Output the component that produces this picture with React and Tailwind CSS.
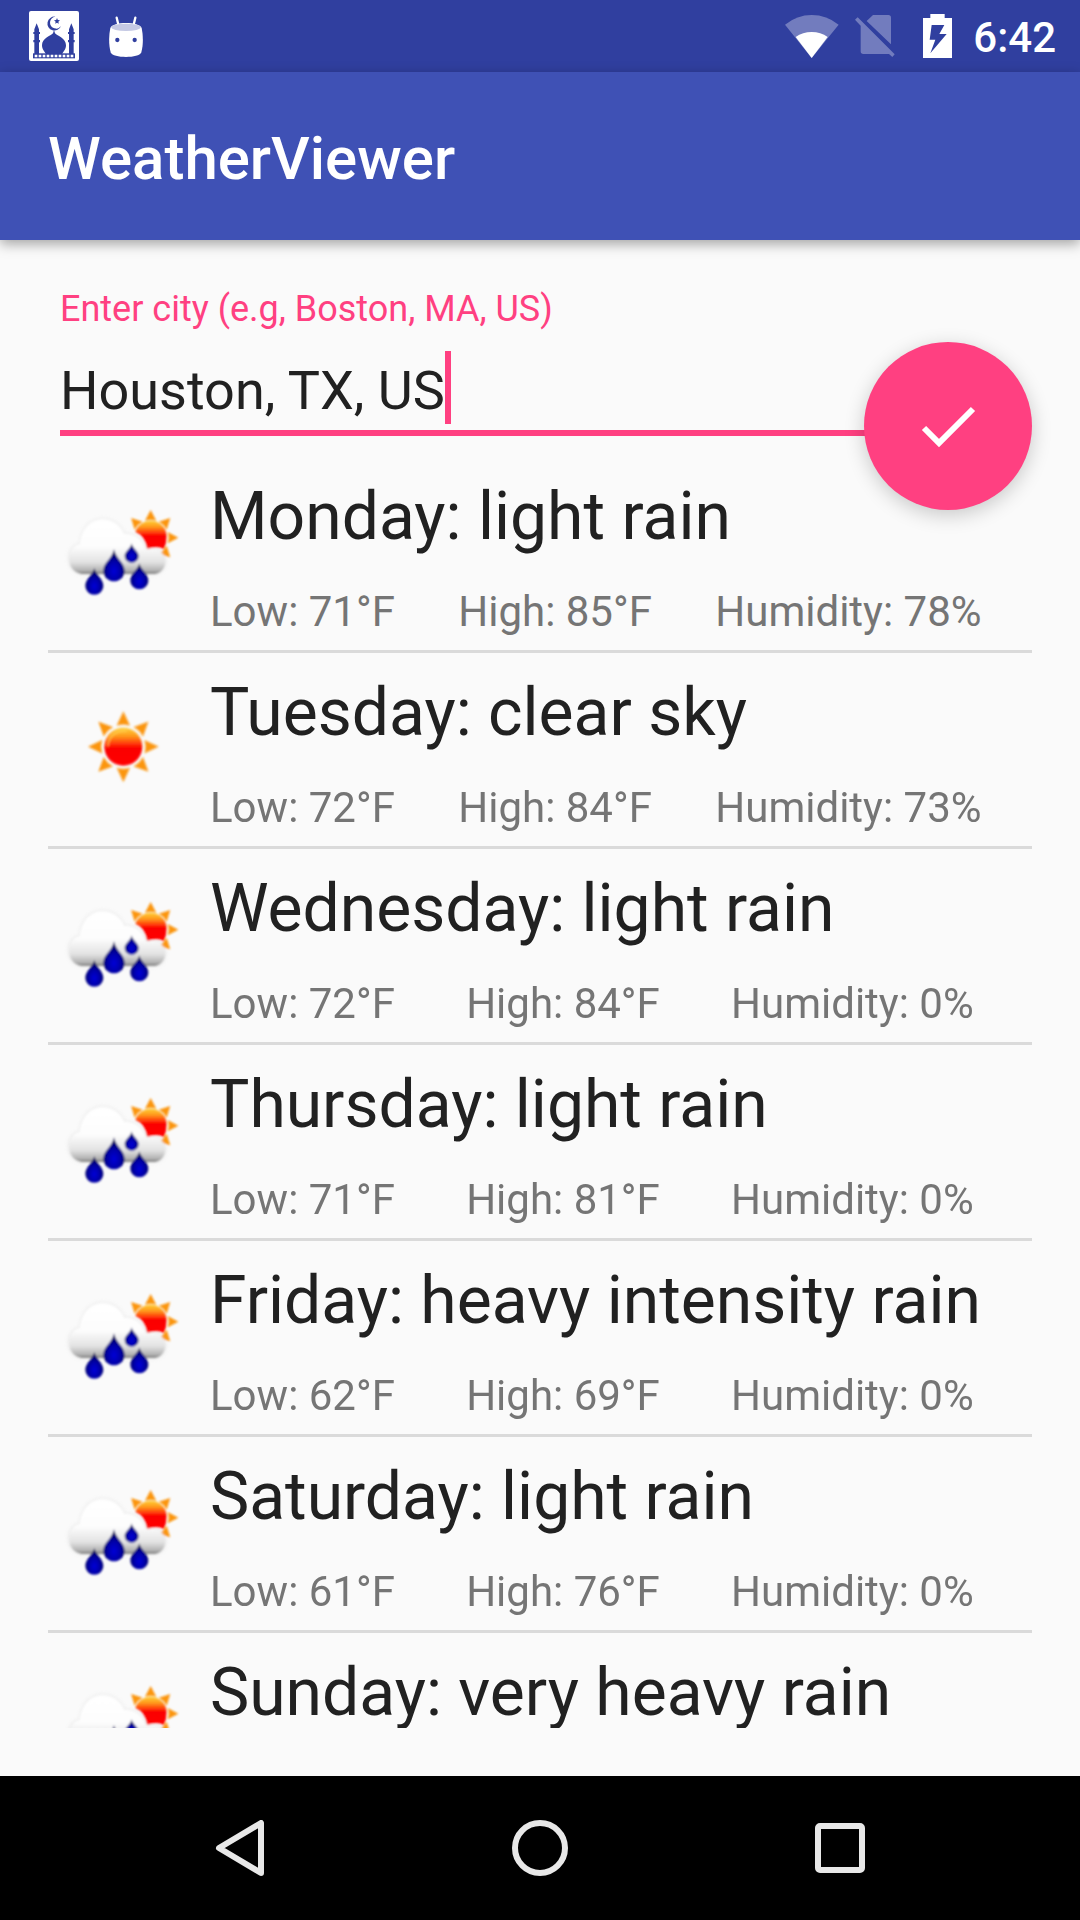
import { useState } from "react";

const forecast = [
  { day: "Monday", description: "light rain", icon: "rain", low: 71, high: 85, humidity: 78 },
  { day: "Tuesday", description: "clear sky", icon: "sun", low: 72, high: 84, humidity: 73 },
  { day: "Wednesday", description: "light rain", icon: "rain", low: 72, high: 84, humidity: 0 },
  { day: "Thursday", description: "light rain", icon: "rain", low: 71, high: 81, humidity: 0 },
  { day: "Friday", description: "heavy intensity rain", icon: "rain", low: 62, high: 69, humidity: 0 },
  { day: "Saturday", description: "light rain", icon: "rain", low: 61, high: 76, humidity: 0 },
  { day: "Sunday", description: "very heavy rain", icon: "rain" },
];

const rayAngles = [0, 45, 90, 135, 180, 225, 270, 315];

function Gradients() {
  return (
    <svg className="absolute size-0" aria-hidden="true">
      <defs>
        <linearGradient id="sunFill" x1="0" y1="0" x2="0" y2="1">
          <stop offset="0" stopColor="#ffcf3a" />
          <stop offset="0.22" stopColor="#ff9a1c" />
          <stop offset="0.42" stopColor="#ff3a08" />
          <stop offset="0.52" stopColor="#fb0505" />
          <stop offset="1" stopColor="#ff0000" />
        </linearGradient>
        <linearGradient id="cloudFill" gradientUnits="userSpaceOnUse" x1="0" y1="115" x2="0" y2="284">
          <stop offset="0" stopColor="#ffffff" />
          <stop offset="0.5" stopColor="#fdfdfd" />
          <stop offset="0.78" stopColor="#e2e2e2" />
          <stop offset="0.92" stopColor="#b5b5b5" />
          <stop offset="1" stopColor="#777777" />
        </linearGradient>
        <radialGradient id="dropFill" cx="0.5" cy="0.68" r="0.6">
          <stop offset="0" stopColor="#0505d8" />
          <stop offset="0.5" stopColor="#0000a8" />
          <stop offset="1" stopColor="#00004e" />
        </radialGradient>
        <filter id="soft" x="-10%" y="-10%" width="120%" height="120%">
          <feGaussianBlur stdDeviation="3" />
        </filter>
        <filter id="cloudEdge" x="-10%" y="-10%" width="120%" height="120%">
          <feGaussianBlur stdDeviation="4" />
        </filter>
      </defs>
    </svg>
  );
}

function SunIcon() {
  return (
    <svg viewBox="24 -24 450 450" className="size-[150px]" aria-hidden="true">
      <g filter="url(#soft)">
        {rayAngles.map((angle) => (
          <path key={angle} d="M250 94 L270 137 Q250 130 230 137 Z" fill="#fb9510" transform={`rotate(${angle} 250 200)`} />
        ))}
        <circle cx="250" cy="200" r="57" fill="url(#sunFill)" />
        <path d="M204 196 A47 47 0 0 1 258 153" fill="none" stroke="#ffd95c" strokeWidth="6" strokeLinecap="round" opacity="0.6" />
      </g>
    </svg>
  );
}

function RainIcon() {
  return (
    <svg viewBox="24 -12 450 450" className="size-[150px]" aria-hidden="true">
      <g filter="url(#soft)">
        {[0, 45, 90, 135, 315].map((angle) => (
          <path key={angle} d="M332 90 L349 122 Q332 116 315 122 Z" fill="#fb9510" transform={`rotate(${angle} 332 173)`} />
        ))}
        <path
          d="M286 156 A48 48 0 0 1 380 168 Q380 190 372 208 Q352 196 322 208 Q316 168 286 156 Z"
          fill="url(#sunFill)"
        />
        <path
          d="M125 284 C95 280 82 254 84 230 C86 208 102 194 118 190 C122 145 150 115 187 115 C222 115 244 136 254 158 C288 160 312 176 320 204 C352 198 376 216 379 240 C380 264 366 282 344 284 Z"
          fill="#c9c9c9"
          opacity="0.3"
          filter="url(#cloudEdge)"
        />
        <path
          d="M125 282 C97 278 86 254 88 232 C90 210 104 196 120 192 C124 147 152 118 187 118 C220 118 242 138 252 161 C286 163 308 178 316 208 C350 201 373 218 376 240 C377 262 364 280 344 282 Z"
          fill="url(#cloudFill)"
        />
        <path d="M163 264 C166 282 190 296 190 318 A27 26 0 0 1 136 318 C136 296 160 282 163 264 Z" fill="url(#dropFill)" />
        <path d="M222 208 C226 234 254 248 254 272 A32 32 0 0 1 190 272 C190 248 218 234 222 208 Z" fill="url(#dropFill)" />
        <path d="M275 190 C277 206 296 214 296 228 A21 20 0 0 1 254 228 C254 214 273 206 275 190 Z" fill="url(#dropFill)" />
        <path d="M298 250 C301 268 325 280 325 302 A27 26 0 0 1 271 302 C271 280 295 268 298 250 Z" fill="url(#dropFill)" />
      </g>
    </svg>
  );
}

function MosqueIcon() {
  return (
    <svg viewBox="87 33 150 150" className="size-[50px]" aria-hidden="true">
      <rect x="87" y="33" width="150" height="150" rx="6" fill="#fff" />
      <g fill="#303f9f">
        <path d="M166 50 A21 21 0 1 0 183 78 A18 18 0 1 1 166 50 Z" />
        <path d="M171 54 l2.500 6 6.500 0.500 -5 4.500 1.500 6.500 -5.500 -3.500 -5.500 3.500 1.500 -6.500 -5 -4.500 6.500 -0.500 Z" />
        <path d="M162 90 L165 100 C172 108 198 114 198 136 C198 148 190 156 186 162 L138 162 C134 156 126 148 126 136 C126 114 152 108 159 100 Z" />
        <path d="M110 70 L117 88 V96 H120 V102 H117 V120 H120 V127 H117 V162 H103 V127 H100 V120 H103 V102 H100 V96 H103 V88 Z" />
        <path d="M214 70 L221 88 V96 H224 V102 H221 V120 H224 V127 H221 V162 H207 V127 H204 V120 H207 V102 H204 V96 H207 V88 Z" />
        <rect x="99" y="160" width="126" height="15" />
      </g>
      <path d="M104 168 H222" stroke="#fff" strokeWidth="8" strokeDasharray="8 4" />
    </svg>
  );
}

function AndroidIcon() {
  return (
    <svg viewBox="327 36 102 123" className="h-[41px] w-[34px]" aria-hidden="true">
      <path d="M350 41 L356 66 M406 41 L400 66" stroke="#fff" strokeWidth="7" strokeLinecap="round" />
      <path d="M331 72 C335 62 355 57 378 57 C401 57 421 62 425 72 C430 96 430 122 424 145 C420 155 400 159 378 159 C356 159 336 155 332 145 C326 122 326 96 331 72 Z" fill="#fff" />
      <ellipse cx="378" cy="70" rx="44" ry="11" fill="#c5c9e4" />
      <circle cx="352" cy="108" r="6.500" fill="#303f9f" />
      <circle cx="404" cy="108" r="6.500" fill="#303f9f" />
    </svg>
  );
}

function WifiIcon() {
  return (
    <svg viewBox="75 42 162 129" className="h-[43px] w-[54px]" aria-hidden="true">
      <path d="M75 71 Q111 42 155 42 Q200 42 236 71 L155 171 Z" fill="#fff" opacity="0.32" />
      <path d="M107 108 Q128 93 155 93 Q182 93 203 108 L155 171 Z" fill="#fff" />
    </svg>
  );
}

function NoSimIcon() {
  return (
    <svg viewBox="288 48 120 126" className="h-[42px] w-[40px]" aria-hidden="true">
      <path
        d="M342 48 H388 Q396 48 396 56 V136 L323 66 Z M296 55 L407 166 L400 174 L390 165 H313 Q305 165 305 157 V80 L288 62 Z"
        fill="#fff"
        opacity="0.32"
      />
    </svg>
  );
}

function BatteryIcon() {
  return (
    <svg viewBox="489 42 87 132" className="h-[44px] w-[29px]" aria-hidden="true">
      <path
        d="M511 42 H554 V54 H576 V174 H489 V54 H511 Z M515 75 L509 119 H526 L511 160 L560 102 H538 L553 75 Z"
        fill="#fff"
        fillRule="evenodd"
      />
    </svg>
  );
}

function StatusBar() {
  return (
    <div className="flex h-[72px] shrink-0 items-center justify-between bg-[#303f9f] pr-6 pl-[29px] text-white">
      <div className="flex items-center gap-[30px]">
        <MosqueIcon />
        <AndroidIcon />
      </div>
      <div className="flex items-center">
        <WifiIcon />
        <div className="ml-4 flex">
          <NoSimIcon />
        </div>
        <div className="ml-7 flex">
          <BatteryIcon />
        </div>
        <span className="ml-[21px] pt-1 text-[42px] leading-[50px] font-medium">6:42</span>
      </div>
    </div>
  );
}

function ForecastRow({ item }) {
  return (
    <li className="flex gap-3 border-b-3 border-[#dadada] pt-[19px] pb-[13px]">
      <div className="size-[150px] shrink-0">{item.icon === "sun" ? <SunIcon /> : <RainIcon />}</div>
      <div className="min-w-0 flex-1 pt-[2px]">
        <h2 className="text-[66px] leading-[78px] whitespace-nowrap text-[#212121]">
          {item.day}: {item.description}
        </h2>
        {item.low !== undefined && (
          <div className="mt-[31px] flex gap-[13px] text-[42px] leading-[50px] whitespace-nowrap text-[#757575]">
            <span className="flex-auto">Low: {item.low}°F</span>
            <span className="flex-auto">High: {item.high}°F</span>
            <span className="flex-auto">Humidity: {item.humidity}%</span>
          </div>
        )}
      </div>
    </li>
  );
}

function NavBar() {
  return (
    <nav className="flex h-36 shrink-0 items-center bg-black px-[90px]">
      <button type="button" aria-label="Back" className="flex flex-1 justify-center">
        <svg viewBox="0 0 56 56" className="size-14" fill="none" stroke="#e8e8e8" strokeWidth="6" strokeLinejoin="round">
          <path d="M49 3 V53 L7 28 Z" />
        </svg>
      </button>
      <button type="button" aria-label="Home" className="flex flex-1 justify-center">
        <svg viewBox="0 0 56 56" className="size-14" fill="none" stroke="#e8e8e8" strokeWidth="6">
          <circle cx="28" cy="28" r="25" />
        </svg>
      </button>
      <button type="button" aria-label="Recent apps" className="flex flex-1 justify-center">
        <svg viewBox="0 0 56 56" className="size-14" fill="none" stroke="#e8e8e8" strokeWidth="6">
          <rect x="6" y="6" width="44" height="44" rx="2" />
        </svg>
      </button>
    </nav>
  );
}

export default function App() {
  const [city, setCity] = useState("Houston, TX, US");

  return (
    <div className="flex h-screen flex-col overflow-hidden bg-[#fafafa] font-['Roboto',sans-serif]">
      <Gradients />
      <StatusBar />
      <header className="relative z-10 flex h-[168px] shrink-0 items-center bg-[#3f51b5] px-12 pt-[6px] shadow-[0_4px_12px_rgba(0,0,0,0.35)]">
        <h1 className="text-[60px] leading-[70px] font-medium text-white">WeatherViewer</h1>
      </header>

      <main className="relative flex min-h-0 flex-1 flex-col p-12">
        <form className="shrink-0 pl-3" onSubmit={(e) => e.preventDefault()}>
          <label htmlFor="city" className="block text-[36px] leading-[42px] text-[#ff4081]">
            Enter city (e.g, Boston, MA, US)
          </label>
          <div className="mt-[21px] mr-[120px] flex items-start border-b-6 border-[#ff4081] pb-[6px]">
            <input
              id="city"
              type="text"
              value={city}
              onChange={(e) => setCity(e.target.value)}
              className="field-sizing-content h-[73px] pt-[6px] text-[54px] leading-[63px] text-[#212121] caret-transparent outline-none"
            />
            <span className="h-[73px] w-[6px] shrink-0 bg-[#ff4081]" />
          </div>
          <button
            type="submit"
            aria-label="Get forecast"
            className="absolute top-[102px] right-12 z-10 flex size-[168px] items-center justify-center rounded-full bg-[#ff4081] shadow-[0_5px_20px_rgba(0,0,0,0.2)]"
          >
            <svg viewBox="0 0 168 168" className="size-[168px]" fill="none" stroke="#fff" strokeWidth="6">
              <path d="M60 86 L75 101 L109 67" />
            </svg>
          </button>
        </form>

        <ul className="mt-[21px] min-h-0 flex-1 overflow-hidden">
          {forecast.map((item) => (
            <ForecastRow key={item.day} item={item} />
          ))}
        </ul>
      </main>

      <NavBar />
    </div>
  );
}
